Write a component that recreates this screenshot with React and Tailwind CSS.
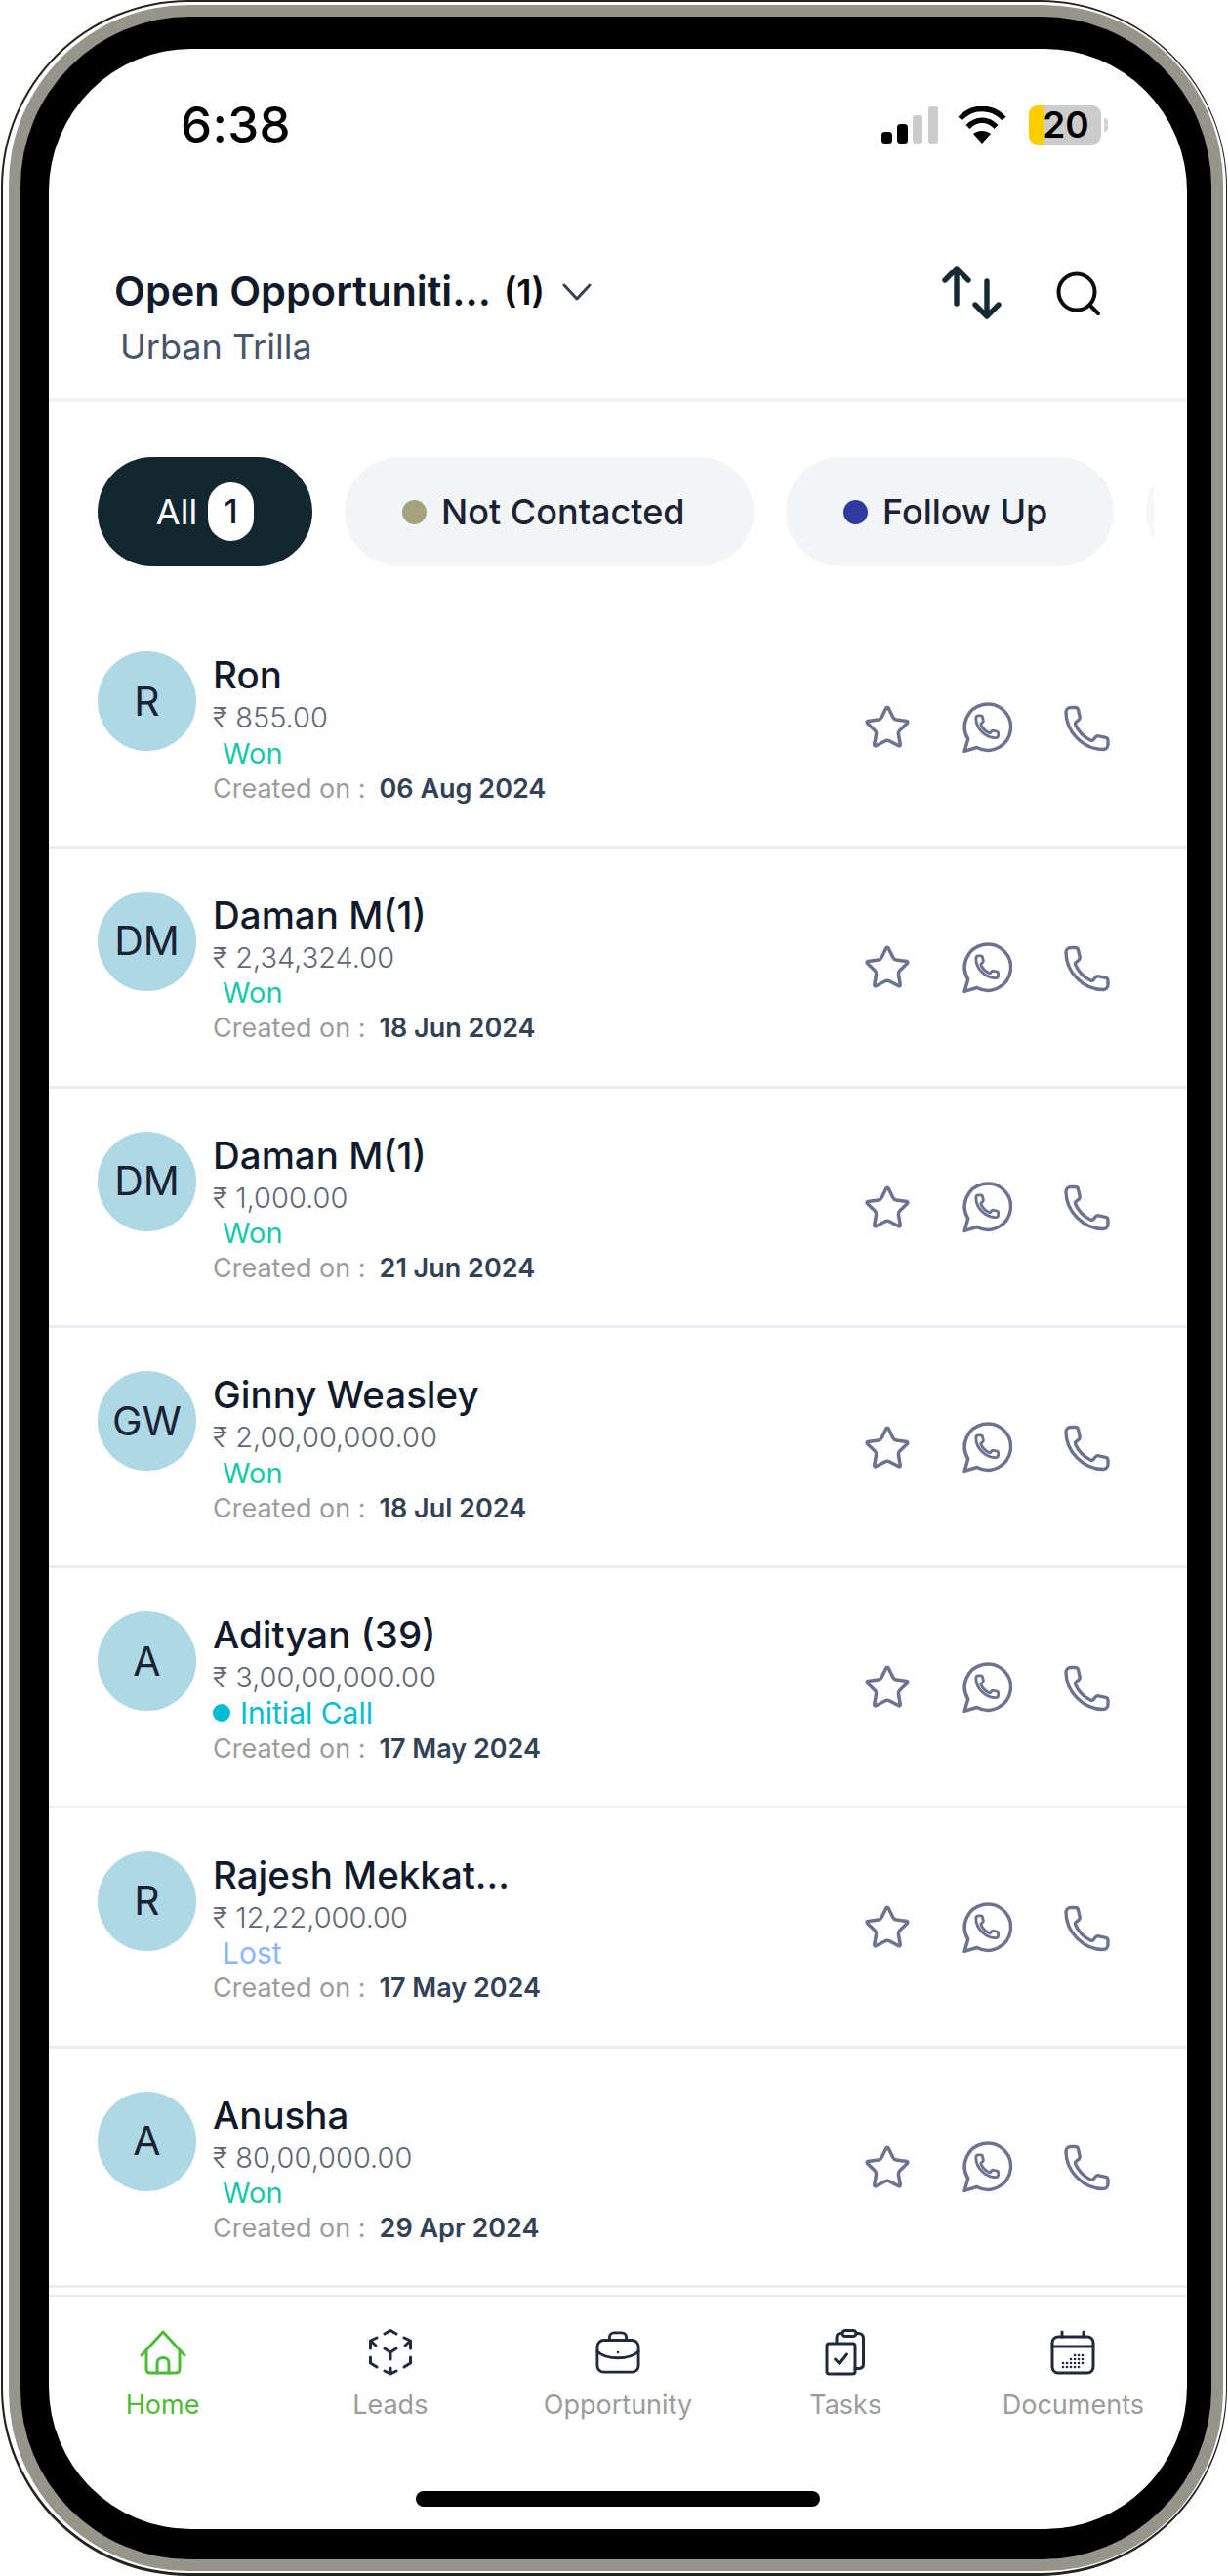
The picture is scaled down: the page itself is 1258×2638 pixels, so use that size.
import React from "react";
import { Star } from "lucide-react";

const HANDSET = "M7 3h4.500c1.500 0 2.700 1 3 2.400l1.600 7c.3 1.300-.2 2.600-1.200 3.400l-2.400 2c-1 .8-1.200 2-.6 3.200C15 28 20 33 27 36.500c1.200.6 2.400.4 3.200-.6l2-2.400c.8-1 2.100-1.500 3.400-1.200l7 1.600c1.400.3 2.400 1.500 2.400 3V41c0 2.800-2.200 5-5 5C20 46 2 28 2 8c0-2.800 2.200-5 5-5z";

function PhoneIcon() {
  return (
    <svg width="48" height="49" viewBox="0 0 48 48" fill="none" stroke="#6b7390" strokeWidth="3.400" strokeLinejoin="round" className="block">
      <path d={HANDSET} />
    </svg>
  );
}

function WhatsAppIcon() {
  return (
    <svg width="51" height="53" viewBox="0 0 50 52" fill="none" stroke="#6b7390" strokeWidth="3.400" strokeLinejoin="round" strokeLinecap="round" className="block">
      <path d="M2 49.500l3.600-12.200A23.200 23.200 0 1 1 14.400 45.600z" />
      <g transform="translate(12.500 12) scale(.52)">
        <path d={HANDSET} strokeWidth="5.400" />
      </g>
    </svg>
  );
}

function SortIcon() {
  return (
    <svg width="62" height="55" viewBox="0 0 62 55" fill="none" stroke="#132a33" strokeWidth="5.400" strokeLinecap="round" strokeLinejoin="round" className="block">
      <path d="M15 3V39M3 15L15 3L27 15" />
      <path d="M46 16V52M34 40L46 52L58 40" />
    </svg>
  );
}

function SearchIcon() {
  return (
    <svg width="46" height="46" viewBox="0 0 46 46" fill="none" stroke="#0b0b0b" strokeWidth="4" strokeLinecap="round" className="block">
      <circle cx="21" cy="21" r="18.500" />
      <path d="M34.500 34.500L43 43" />
    </svg>
  );
}

function Chevron() {
  return (
    <svg width="30" height="18" viewBox="0 0 30 18" fill="none" stroke="#374151" strokeWidth="3" strokeLinecap="round" strokeLinejoin="round" className="block">
      <path d="M2 2L15 16L28 2" />
    </svg>
  );
}

function HomeIcon() {
  return (
    <svg width="48" height="46" viewBox="0 0 48 46" fill="none" stroke="#4cbb35" strokeWidth="3" strokeLinecap="round" strokeLinejoin="round" className="block">
      <path d="M2 26L24 2L46 26" />
      <path d="M7 21V40c0 2.500 1.500 4 4 4H37c2.500 0 4-1.500 4-4V21" />
      <path d="M18 44V34c0-3.500 2.500-5.500 6-5.500s6 2 6 5.500V44" />
    </svg>
  );
}

function LeadsIcon() {
  return (
    <svg width="48" height="48" viewBox="0 0 48 48" fill="none" stroke="#1f2a3c" strokeWidth="3" strokeLinecap="round" strokeLinejoin="round" className="block">
      <path d="M18 5L24 1.500L30 5" />
      <path d="M3.500 20V12L10 9M3.500 12L9 17" />
      <path d="M44.500 20V12L38 9M44.500 12L39 17" />
      <path d="M18 20L24 24L30 20M24 24V31" />
      <path d="M3.500 29V35L10 39" />
      <path d="M44.500 29V35L38 39" />
      <path d="M18 43L24 46L30 43M24 40V46" />
    </svg>
  );
}

function CaseIcon() {
  return (
    <svg width="46" height="46" viewBox="0 0 48 46" fill="none" stroke="#1f2a3c" strokeWidth="3" strokeLinecap="round" strokeLinejoin="round" className="block">
      <rect x="2" y="10" width="44" height="34" rx="7" />
      <path d="M15 10V7c0-3 2-5 5-5h8c3 0 5 2 5 5v3" />
      <path d="M2 22c5 5 12 7 22 7s17-2 22-7" />
      <circle cx="24" cy="23" r="1.300" fill="#1f2a3c" stroke="none" />
    </svg>
  );
}

function TasksIcon() {
  return (
    <svg width="42" height="48" viewBox="0 0 42 48" fill="none" stroke="#1f2a3c" strokeWidth="3" strokeLinecap="round" strokeLinejoin="round" className="block">
      <path d="M12 14V9c0-3 1.500-4.500 4.500-4.500h18c3 0 5 2 5 5V36c0 3-2 4.500-5 4.500H31" />
      <rect x="18" y="1.500" width="14" height="6" rx="3" fill="#fff" />
      <rect x="2" y="15" width="29" height="31" rx="2.500" />
      <path d="M10.500 31L15 35.500L22.500 26" />
    </svg>
  );
}

function DocsIcon() {
  const dots = [
    [21, 30], [25, 30], [29, 30], [33, 30],
    [13, 34], [17, 34], [21, 34], [25, 34], [29, 34], [33, 34],
    [13, 38], [17, 38], [21, 38], [25, 38], [29, 38],
    [25, 26], [29, 26], [33, 26],
  ];
  return (
    <svg width="46" height="46" viewBox="0 0 46 46" fill="none" stroke="#1f2a3c" strokeWidth="3" strokeLinecap="round" strokeLinejoin="round" className="block">
      <rect x="2" y="7" width="42" height="37" rx="6" />
      <path d="M2 17H44M12 2V7M34 2V7" />
      {dots.map(([x, y]) => (
        <circle key={`${x}-${y}`} cx={x} cy={y} r="1.300" fill="#1f2a3c" stroke="none" />
      ))}
    </svg>
  );
}

function SignalIcon() {
  return (
    <svg width="58" height="38" viewBox="0 0 58 38" className="block">
      <rect x="0" y="26" width="11" height="12" rx="3.500" fill="#000" />
      <rect x="16" y="18" width="11" height="20" rx="3.500" fill="#000" />
      <rect x="32" y="9" width="10" height="29" rx="3" fill="#cccccc" />
      <rect x="48" y="0" width="10" height="38" rx="3" fill="#cccccc" />
    </svg>
  );
}

function WifiIcon() {
  return (
    <svg width="50" height="38" viewBox="0 0 50 38" fill="none" stroke="#000" strokeWidth="5.500" className="block">
      <path d="M2.500 12.500C15 -1 35 -1 47.500 12.500" />
      <path d="M10.500 21C19 12 31 12 39.500 21" />
      <path d="M25 38L16 28C21 24 29 24 34 28Z" fill="#000" stroke="none" />
    </svg>
  );
}

function Chip({ dot, label, className }) {
  return (
    <div className={`flex h-[112px] shrink-0 items-center rounded-full bg-[#f3f4f6] ${className}`}>
      <span className="h-[25px] w-[25px] shrink-0 rounded-full" style={{ backgroundColor: dot }} />
      <span className="ml-[15px] text-[36px] leading-none font-medium whitespace-nowrap text-[#1a2233]">{label}</span>
    </div>
  );
}

const ROWS = [
  { i: "R", name: "Ron", price: "₹ 855.00", status: "Won", date: "06 Aug 2024" },
  { i: "DM", name: "Daman M(1)", price: "₹ 2,34,324.00", status: "Won", date: "18 Jun 2024" },
  { i: "DM", name: "Daman M(1)", price: "₹ 1,000.00", status: "Won", date: "21 Jun 2024" },
  { i: "GW", name: "Ginny Weasley", price: "₹ 2,00,00,000.00", status: "Won", date: "18 Jul 2024" },
  { i: "A", name: "Adityan (39)", price: "₹ 3,00,00,000.00", status: "Initial Call", date: "17 May 2024" },
  { i: "R", name: "Rajesh Mekkat...", price: "₹ 12,22,000.00", status: "Lost", date: "17 May 2024" },
  { i: "A", name: "Anusha", price: "₹ 80,00,000.00", status: "Won", date: "29 Apr 2024" },
];

function Status({ value }) {
  if (value === "Initial Call") {
    return (
      <div className="flex h-[36px] items-center text-[30px] leading-none text-[#00bcd4]">
        <span className="mr-[10px] h-[18px] w-[18px] rounded-full bg-[#00bcd4]" />
        {value}
      </div>
    );
  }
  if (value === "Lost") {
    return <div className="flex h-[36px] items-center pl-[10px] text-[30px] leading-none text-[#8db4ff]">{value}</div>;
  }
  return <div className="flex h-[36px] items-center pl-[10px] text-[29px] leading-none text-[#14c8a8]">{value}</div>;
}

function Row({ r }) {
  return (
    <div className="flex h-[245.75px] shrink-0 items-start justify-between border-b-[3px] border-[#e9edf2] pr-[78px] pl-[50px]">
      <div className="flex items-start pt-[44px]">
        <div className="flex h-[102px] w-[101px] items-center justify-center rounded-full bg-[#add8e6] text-[41px] leading-none text-[#1a2233]">
          {r.i}
        </div>
        <div className="ml-[17px] flex flex-col pt-[2px]">
          <div className="h-[46px] text-[38.500px] leading-[44px] font-medium text-[#111a2b]">{r.name}</div>
          <div className="h-[38px] text-[29px] leading-[40px] font-light text-[#5f6775]">{r.price}</div>
          <Status value={r.status} />
          <div className="flex h-[36px] items-center text-[27px] leading-none">
            <span className="font-normal text-[#9c9c9c]">Created on :</span>
            <span className="ml-[14px] font-semibold text-[#334155]">{r.date}</span>
          </div>
        </div>
      </div>
      <div className="flex h-full items-center pt-[2px]">
        <Star size={50} strokeWidth={1.7} color="#6b7390" className="block" />
        <div className="ml-[52px]"><WhatsAppIcon /></div>
        <div className="ml-[53px]"><PhoneIcon /></div>
      </div>
    </div>
  );
}

function NavItem({ icon, label, active }) {
  return (
    <div className="flex flex-col items-center">
      <div className="flex h-[48px] items-center justify-center">{icon}</div>
      <div className={`mt-[10px] text-[27px] leading-[40px] whitespace-nowrap ${active ? "text-[#4cbb35]" : "text-[#9b9b9b]"}`}>{label}</div>
    </div>
  );
}

export default function App() {
  return (
    <div className="h-[2638px] w-[1258px] overflow-hidden bg-white pl-px font-['Inter',sans-serif]">
      <div className="h-[2638px] w-[1256px] rounded-[192px] bg-[#23241c] pt-[1.500px] pr-[1.500px] pb-[3px] pl-[2px]">
        <div className="h-full rounded-[190px] bg-white pt-[3.500px] pr-[2.500px] pb-[2px] pl-[6px]">
          <div className="h-full rounded-[184px] bg-[#95958c] p-[12px]">
            <div className="h-full rounded-[174px] bg-black pt-[33px] pr-[25px] pb-[31px] pl-[29px]">
              <div className="flex h-full flex-col overflow-hidden rounded-[146px] bg-white">
                {/* status bar */}
                <div className="flex h-[110px] shrink-0 items-end justify-between pr-[81px] pl-[135px]">
                  <div className="mb-[2px] text-[51px] leading-[60px] font-medium tracking-[0.3px] text-black">6:38</div>
                  <div className="mb-[12px] flex items-center">
                    <SignalIcon />
                    <div className="ml-[20px]"><WifiIcon /></div>
                    <div className="relative ml-[23px] flex h-[40px] w-[74px] items-center justify-center rounded-[9px] bg-[#cccccc]">
                      <div className="absolute top-0 bottom-0 left-0 w-[15px] rounded-l-[9px] bg-[#ffcc00]" />
                      <span className="relative ml-[2px] text-[37px] leading-[40px] font-semibold text-black">20</span>
                    </div>
                    <div className="ml-[3px] h-[14px] w-[4px] rounded-r-full bg-[#d4d4d4]" />
                  </div>
                </div>
                {/* header */}
                <div className="flex h-[252px] shrink-0 justify-between border-b-[4px] border-[#f1f3f5] pr-[88px] pl-[67px]">
                  <div className="flex flex-col pt-[109px]">
                    <div className="flex h-[60px] items-center">
                      <span className="text-[41.500px] leading-none font-semibold whitespace-nowrap text-[#111a2b]">Open Opportuniti...</span>
                      <span className="ml-[13px] text-[36px] leading-none font-semibold text-[#0b0b0b]">(1)</span>
                      <span className="ml-[18px]"><Chevron /></span>
                    </div>
                    <div className="mt-[6px] ml-[6px] text-[36px] leading-[40px] text-[#475569]">Urban Trilla</div>
                  </div>
                  <div className="flex items-start pt-[112px]">
                    <SortIcon />
                    <div className="mt-[6px] ml-[55px]"><SearchIcon /></div>
                  </div>
                </div>
                {/* chips */}
                <div className="h-[211px] shrink-0 pt-[56px] pl-[50px]">
                  <div className="flex w-[1082px] gap-[33px] overflow-hidden">
                    <div className="flex h-[112px] w-[220px] shrink-0 items-center justify-center rounded-full bg-[#12272f]">
                      <span className="text-[36px] leading-none font-normal text-white">All</span>
                      <span className="ml-[11px] flex h-[60px] w-[47px] items-center justify-center rounded-full bg-white text-[34px] leading-none font-medium text-[#111a2b]">1</span>
                    </div>
                    <Chip dot="#a3a380" label="Not Contacted" className="w-[419px] pl-[59px]" />
                    <Chip dot="#2e3a9e" label="Follow Up" className="w-[336px] pl-[59px]" />
                    <div className="h-[112px] w-[200px] shrink-0 rounded-full bg-[#f6f7f8]" />
                  </div>
                </div>
                {/* list */}
                <div className="flex flex-col">
                  {ROWS.map((r, idx) => (
                    <Row key={idx} r={r} />
                  ))}
                </div>
                {/* nav */}
                <div className="mt-[7px] flex-1 border-t-[2px] border-[#e7e9ec]">
                  <div className="grid grid-cols-5 pt-[33px]">
                    <NavItem icon={<HomeIcon />} label="Home" active />
                    <NavItem icon={<LeadsIcon />} label="Leads" />
                    <NavItem icon={<CaseIcon />} label="Opportunity" />
                    <NavItem icon={<TasksIcon />} label="Tasks" />
                    <NavItem icon={<DocsIcon />} label="Documents" />
                  </div>
                  <div className="mt-[68px] flex justify-center">
                    <div className="h-[16px] w-[414px] rounded-full bg-black" />
                  </div>
                </div>
              </div>
            </div>
          </div>
        </div>
      </div>
    </div>
  );
}
